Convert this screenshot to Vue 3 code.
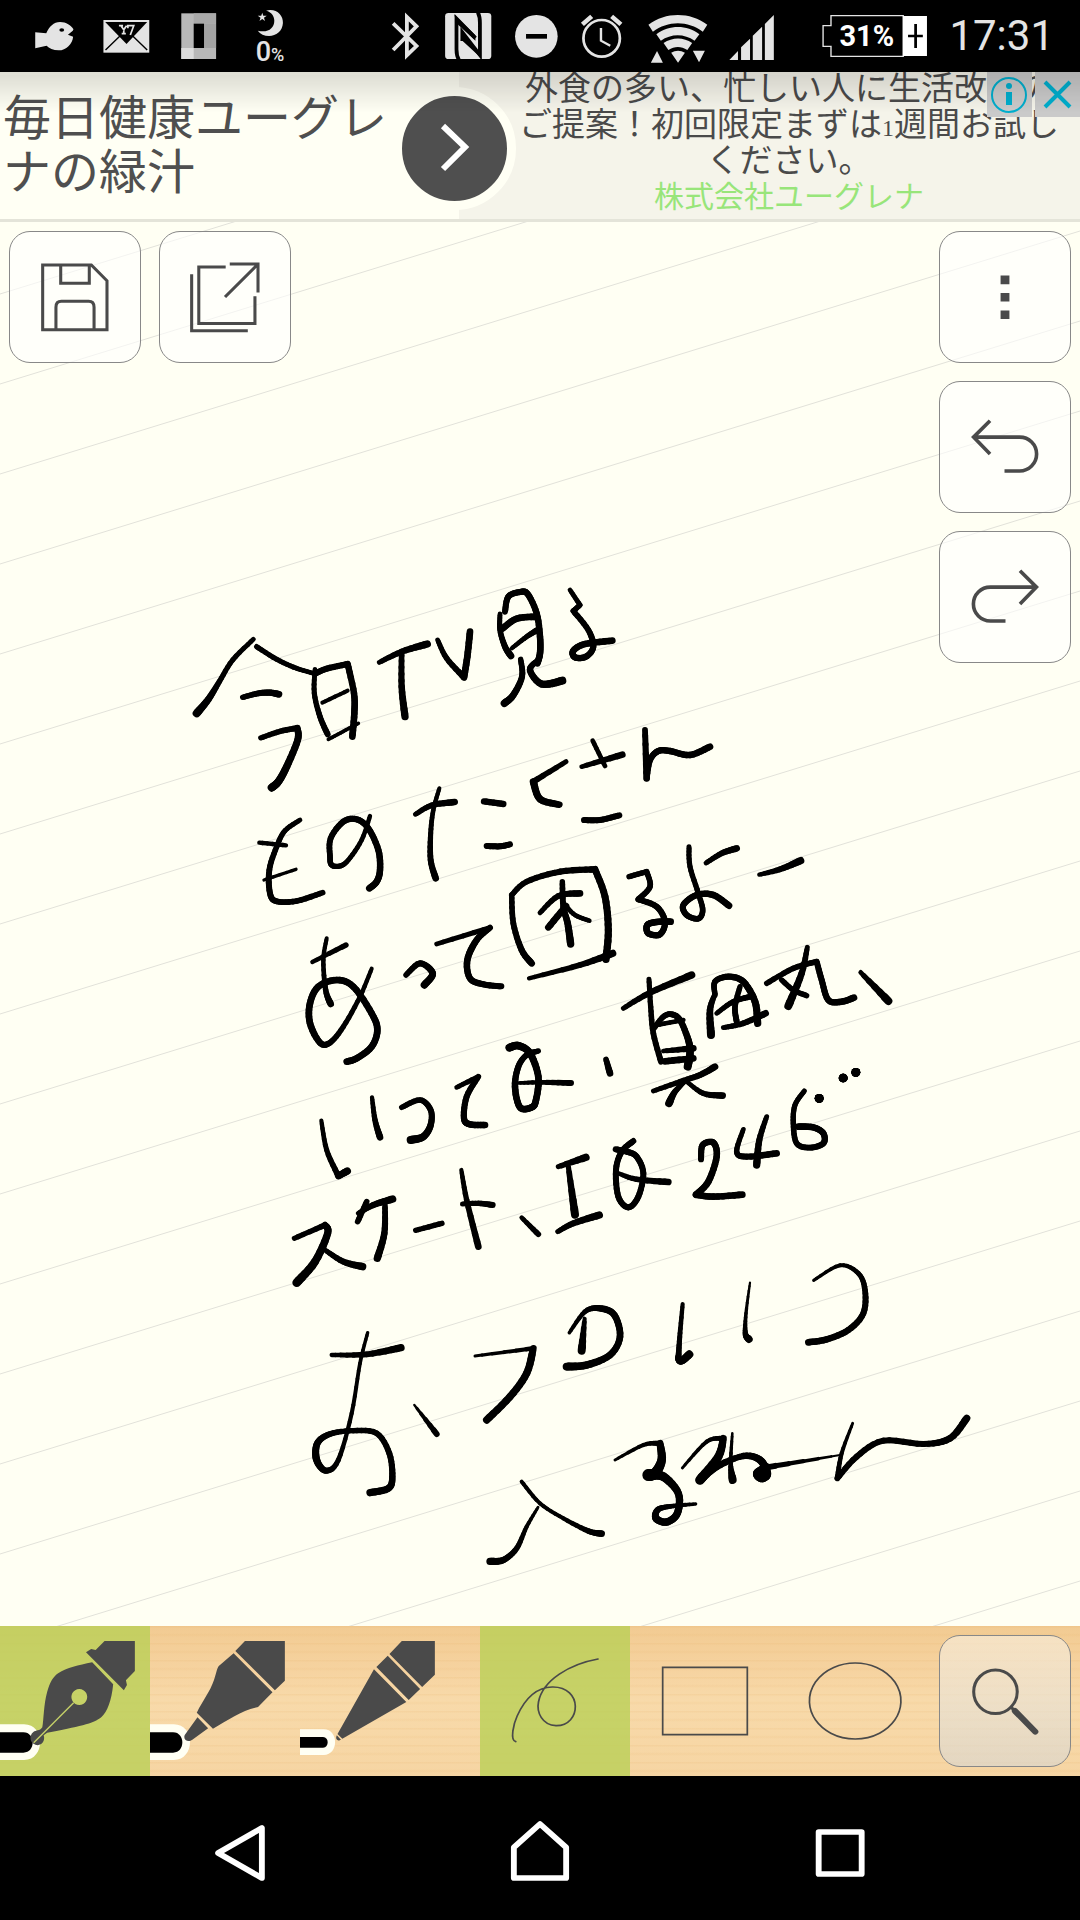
<template>
  <div class="screen">
    <header class="status-bar">
      <div class="status-group">
        <svg class="w72" viewBox="52 0 209 216" preserveAspectRatio="none">
          <path fill="#e4e4e4" d="M102 97l32 3c8-20 22-34 40-34 18 0 32 10 39 22l-2 4-14 12 15 6c-2 22-20 41-42 41-16 0-28-6-35-14l-33 8z" />
          <ellipse cx="179" cy="90" rx="7" ry="5" fill="#000" />
        </svg>
        <svg class="w72" viewBox="261 0 209 216" preserveAspectRatio="none">
          <rect x="300" y="60" width="133" height="98" fill="#e4e4e4" />
          <path fill="#000" d="M305 66h122l-60 66z" />
          <path fill="none" stroke="#000" stroke-width="4" d="M306 150l42-42M427 150l-42-42" />
          <path fill="none" stroke="#e4e4e4" stroke-width="5" d="M345 77h12M351 77l8 12 8-12M359 89v12M353 101h12M368 77h20l-10 28M371 77v8" />
        </svg>
        <svg class="w72" viewBox="470 0 209 216" preserveAspectRatio="none">
          <rect x="526" y="40" width="101" height="137" fill="#b8b8b8" />
          <rect x="592" y="71" width="35" height="73" fill="#a3a3a3" />
          <rect x="562" y="40" width="65" height="31" fill="#a9a9a9" />
          <rect x="526" y="144" width="36" height="33" fill="#dcdcdc" />
          <rect x="562" y="71" width="30" height="73" fill="#000" />
        </svg>
        <div class="sleep">
          <svg class="moon" viewBox="679 27 209 90" preserveAspectRatio="none">
            <path fill="#e4e4e4" d="M772 35c30-8 50 14 49 37-1 24-20 39-40 39-14 0-26-6-33-16 30 8 48-8 48-30 0-14-8-26-24-30z" />
            <path fill="#e4e4e4" d="M761 41l3 9 10 0-8 6 3 10-8-6-8 6 3-10-8-6 10 0z" />
          </svg>
          <span class="sleep-text">0<small>%</small></span>
        </div>
      </div>
      <div class="status-group">
        <svg class="w52" viewBox="1103 0 151 216" preserveAspectRatio="none">
          <path fill="none" stroke="#e4e4e4" stroke-width="11" d="M1144 70l68 68-28 28V51l28 28-68 71" />
        </svg>
        <svg class="w72" viewBox="1254 0 209 216" preserveAspectRatio="none">
          <rect x="1295" y="39" width="134" height="138" rx="10" fill="#e4e4e4" />
          <path fill="none" stroke="#000" stroke-width="11" d="M1335 180q-7-12-7-32V56l55 58M1390 37q6 12 6 32v96l-51-68v26" />
          <path fill="#000" d="M1322 44l61 62v16l-55-52zM1402 176l-57-76v22z" />
        </svg>
        <svg class="w66" viewBox="1463 0 192 216" preserveAspectRatio="none">
          <ellipse cx="1560" cy="109" rx="62" ry="64" fill="#e4e4e4" />
          <rect x="1530" y="102" width="61" height="14" fill="#000" />
        </svg>
        <svg class="w66" viewBox="87 0 192 216" preserveAspectRatio="none">
          <ellipse cx="182" cy="115" rx="53" ry="55" fill="none" stroke="#e4e4e4" stroke-width="8" />
          <path fill="none" stroke="#e4e4e4" stroke-width="7" d="M180 84v38l27 15" />
          <path fill="none" stroke="#e4e4e4" stroke-width="13" d="M126 73l27-24M211 49l27 24" />
        </svg>
        <svg class="w84" viewBox="279 0 244 216" preserveAspectRatio="none">
          <g fill="#e4e4e4">
            <path d="M318 74c50-39 121-39 171 0l-13 21c-43-34-102-34-145 0z" />
            <path d="M341 103c38-29 88-29 125 0l-14 19c-30-22-68-22-98 0z" />
            <path d="M362 129c26-18 58-18 83 0l-14 21c-18-12-37-12-55 0z" />
            <path d="M384 158c13-8 27-8 40 0l-20 30zM325 188l18-35 17 35zM447 152h35l-17 35z" />
          </g>
        </svg>
        <svg class="w80" viewBox="523 0 232 216" preserveAspectRatio="none">
          <path fill="#e4e4e4" d="M553 180l25-27v27zM587 180v-38l26-26v64zM621 180v-73l27-27v100zM656 180V72l26-27v135z" />
        </svg>
        <div class="battery">
          <svg class="w140" viewBox="755 0 407 216" preserveAspectRatio="none">
            <path fill="none" stroke="#e4e4e4" stroke-width="4" d="M1060 47H848v30h-23v62h23v30h212" />
            <rect x="1056" y="48" width="71" height="120" fill="#fff" />
            <path stroke="#000" stroke-width="8" d="M1072 108h43M1094 72v72" />
          </svg>
          <span class="battery-text">31%</span>
        </div>
        <time class="clock">17:31</time>
      </div>
    </header>

    <section class="ad">
      <a class="ad-title" href="#">毎日健康ユーグレナの緑汁</a>
      <button class="ad-go" aria-label="開く">
        <svg viewBox="0 0 105 105"><path d="M41 30l22 21-22 22" fill="none" stroke="#fff" stroke-width="6" /></svg>
      </button>
      <div class="ad-body">
        <p>外食の多い、忙しい人に生活改善の</p>
        <p>ご提案！初回限定まずは<span class="one">1</span>週間お試し</p>
        <p>ください。</p>
        <a class="ad-company" href="#">株式会社ユーグレナ</a>
      </div>
      <div class="ad-choices">
        <button aria-label="広告情報">
          <svg viewBox="0 0 45 45">
            <circle cx="22" cy="23" r="17" fill="none" stroke="#00aecd" stroke-width="2" />
            <circle cx="22" cy="14" r="3" fill="#00aecd" />
            <rect x="19" y="20" width="6" height="13" fill="#00aecd" />
          </svg>
        </button>
        <button aria-label="閉じる">
          <svg viewBox="0 0 45 45"><path d="M10 10l25 25M35 10L10 35" stroke="#00aecd" stroke-width="4" /></svg>
        </button>
      </div>
    </section>

    <main class="paper">
      <svg class="ink" viewBox="0 222 1080 1404" preserveAspectRatio="xMidYMin slice">
        <path class="rule" :d="ruledLines" />
        <g v-for="(block, b) in ink" :key="b" :transform="block.place">
          <line
            v-for="(s, i) in block.segments"
            :key="i"
            :x1="s.x1"
            :y1="s.y1"
            :x2="s.x2"
            :y2="s.y2"
            :stroke-width="s.w"
          />
        </g>
      </svg>
      <div class="actions">
        <button class="tile" aria-label="保存">
          <svg viewBox="27 693 382 394" preserveAspectRatio="none">
            <path d="M123 793h143l46 48v148H123zM176 793v55h84v-55M162 989v-68q0-18 16-18h80q16 0 16 18v68" />
          </svg>
        </button>
        <button class="tile" aria-label="共有">
          <svg viewBox="463 693 382 394" preserveAspectRatio="none">
            <path d="M656 799h-79v171h165v-82M556 821v171h165M668 790h83v86M751 790L654 890" />
          </svg>
        </button>
      </div>
      <div class="actions side">
        <button class="tile" aria-label="メニュー">
          <svg viewBox="1160 693 382 394" preserveAspectRatio="none">
            <path class="solid" d="M1338 825h26v26h-26zM1338 878h26v26h-26zM1338 931h26v26h-26z" />
          </svg>
        </button>
        <button class="tile" aria-label="元に戻す">
          <svg viewBox="118 64 395 394">
            <path class="bold" d="M314 334h46a51 51 0 0 0 0-103H220M270 181l-50 50 50 51" />
          </svg>
        </button>
        <button class="tile" aria-label="やり直す">
          <svg viewBox="118 514 395 394">
            <path class="bold" d="M317 784h-46a51 51 0 0 1 0-103h140M361 631l50 50-50 51" />
          </svg>
        </button>
      </div>
    </main>

    <div class="tools">
      <button
        v-for="t in pens"
        :key="t.id"
        class="tool"
        :class="{ active: pen === t.id }"
        :aria-label="t.label"
        :aria-pressed="pen === t.id"
        @click="pen = t.id"
      >
        <svg :viewBox="t.box" preserveAspectRatio="none">
          <path class="sample-edge" :d="t.edge" />
          <path class="sample" :d="t.sample" />
          <path class="nib" fill-rule="evenodd" :d="t.nib" />
          <path v-if="t.slit" class="slit" :d="t.slit" />
        </svg>
      </button>
      <button
        v-for="t in shapes"
        :key="t.id"
        class="tool shape"
        :class="{ active: shape === t.id }"
        :aria-label="t.label"
        :aria-pressed="shape === t.id"
        @click="shape = t.id"
      >
        <svg :viewBox="t.box" preserveAspectRatio="none"><path class="outline" :d="t.d" /></svg>
      </button>
      <button class="tile zoom" aria-label="拡大">
        <svg viewBox="1160 106 382 394" preserveAspectRatio="none">
          <ellipse cx="1323" cy="275" rx="64" ry="66" />
          <path d="M1366 319l14 14" />
          <path class="handle" d="M1380 333l60 63" />
        </svg>
      </button>
    </div>

    <nav class="nav">
      <button aria-label="戻る">
        <svg viewBox="261 528 871 432" preserveAspectRatio="none"><path d="M760 684v150L633 759z" /></svg>
      </button>
      <button aria-label="ホーム">
        <svg viewBox="1132 528 872 432" preserveAspectRatio="none"><path d="M1492 834V742l76-70 76 70v92z" /></svg>
      </button>
      <button aria-label="履歴">
        <svg viewBox="436 528 872 432" preserveAspectRatio="none"><path d="M810 696h125v126H810z" /></svg>
      </button>
    </nav>
  </div>
</template>

<script setup>
import { ref } from "vue";

const pen = ref("fountain");
const shape = ref("free");

const pens = [
  {
    id: "fountain",
    label: "万年筆",
    box: "0 78 436 450",
    edge: "M0 373H70C132 373 132 480 70 480H0z",
    sample: "M0 397H68C104 397 104 458 68 458H0z",
    nib: "M304 123h88v90l-26 28 3 14-9 16-110-114 15-10 13 3zM268 187l61 66c-5 50-17 82-34 98-22 20-70 30-158 47l-10 8c6 20-10 34-24 28-16-5-20-26-6-38 8-6 18-2 26-14 4-22 4-70 14-106 8-30 18-46 32-56 26-18 58-24 99-33zM230 267a23 24 0 1 0 1 0z",
    slit: "M98 428L214 308"
  },
  {
    id: "marker",
    label: "マーカー",
    box: "436 78 436 450",
    edge: "M436 373H505C568 373 568 480 505 480H436z",
    sample: "M436 397H503C539 397 539 458 503 458H436z",
    nib: "M712 123h116v119l-29 29-115-118zM679 160l113 117-42 44c-46 9-86 38-131 65l-47-48c18-38 38-62 50-98 8-24 8-34 14-42zM574 352l31 33-46 34c-12 10-28 0-22-14z"
  },
  {
    id: "pencil",
    label: "鉛筆",
    box: "871 78 436 450",
    edge: "M871 388H940C984 388 984 465 940 465H871z",
    sample: "M871 411H938C956 411 956 443 938 443H871z",
    nib: "M1167 123h96v101l-37 37-95-99zM1126 167l94 100-33 33-94-99zM1086 208l94 98-186 110-14-14zM978 406l12 13c-8 6-18 0-12-13z"
  }
];

const shapes = [
  { id: "free", label: "自由線", box: "-174 78 436 450", d: "M-70 425C-88 422-76 370-66 348-45 300-14 262 36 261 126 259 121 378 47 377 6 375-10 336-4 306 8 240 88 192 169 177" },
  { id: "rect", label: "四角形", box: "261 78 436 450", d: "M356 202H602V404H356z" },
  { id: "oval", label: "楕円", box: "697 78 436 450", d: "M915 189a133 114 0 1 0 1 0z" }
];

// ruled lines of the tilted page
const ruledLines = Array.from({ length: 22 }, (_, i) => {
  const y = 204 + i * 90;
  return `M0 ${y}L1080 ${y - 333}`;
}).join("");

// each stroke: [pressure list, points]; a repeated point makes a corner
const notes = [
  {
    x: 180, y: 570,
    strokes: [
      [[14, 16, 24], "220,208 158,270 118,335 85,388 50,430"],
      [[16, 14], "230,230 290,268 350,295 405,311"],
      [[16, 20], "188,382 235,370 270,368 297,373"],
      [[15, 20, 24], "242,504 300,484 352,474 352,474 353,510 320,590 295,635 275,653"],
      [[14, 18], "405,298 403,370 420,440 443,493"],
      [[18, 20], "405,311 440,296 503,282 503,282 522,370 523,430 517,500"],
      [[12], "427,398 503,362"],
      [[11], "445,508 490,484 535,460"],
      [[14, 22], "598,277 665,245 742,222"],
      [[16, 22], "665,245 665,350 675,440"],
      [[14, 20, 20], "773,210 800,265 852,322 852,322 862,260 870,185"],
      [[18, 20], "975,125 985,80 1020,66 1043,72 1070,130 1080,200 1080,250 1072,280"],
      [[14, 20], "960,132 960,180 975,230 993,258"],
      [[20], "966,177 1010,146 1070,140"],
      [[12, 18], "995,235 1040,200 1072,180"],
      [[16, 22], "1022,268 1026,320 1000,375 973,400"],
      [[16, 24], "1072,272 1050,300 1085,342 1147,332"],
      [[14, 18, 20], "1170,60 1200,105 1200,105 1180,123 1180,123 1225,180 1240,230 1218,260 1185,262 1180,242 1215,222 1297,212"],
      [[14, 18, 17], "360,750 315,782 290,830 268,900 270,970 290,994 350,993 428,968"],
      [[13], "238,818 318,826"],
      [[10], "252,930 348,898"],
      [[13, 18, 20], "570,738 545,810 505,870 480,888 455,885 450,860 452,805 490,755 530,748 565,775 595,840 600,900 590,935 568,955"],
      [[12, 15, 20], "778,655 760,720 752,790 752,870 767,925"],
      [[14, 20], "706,733 755,706 824,696"],
      [[19], "912,694 970,702"],
      [[18], "920,828 960,829 990,823"],
      [[14, 22, 20], "1158,575 1060,635 1060,635 1080,687 1138,704"],
      [[14], "1238,512 1275,588"],
      [[13, 20], "1205,590 1327,554"],
      [[18], "1212,750 1260,750 1318,736"]
    ]
  },
  {
    x: 480, y: 570,
    strokes: [
      [[17, 20], "495,480 500,625"],
      [[18, 20], "500,625 510,570 535,543 570,543 630,555 690,530"],
      [[16, 20], "95,975 100,1060 125,1140 155,1180"],
      [[16, 20, 22], "95,975 140,935 240,905 345,898 345,898 375,980 385,1080 378,1168"],
      [[12, 22], "147,1225 300,1185 398,1150"],
      [[16, 22], "247,935 250,1010 263,1060 272,1122"],
      [[14, 20], "180,1028 235,978 300,970"],
      [[20], "205,1072 258,1008"],
      [[14], "255,1005 285,1035 328,1052"],
      [[16, 20], "447,920 500,905 500,905 510,950 475,988 475,988 530,1010 555,1055 540,1093 505,1090 502,1065 530,1056 572,1055"],
      [[15, 20], "627,830 630,890 655,970 668,1020 655,1046 620,1035 610,1005 650,975 700,975 747,1007"],
      [[14, 20], "678,879 725,850 770,835"],
      [[12, 22], "838,914 900,898 962,872"]
    ]
  },
  {
    x: 260, y: 880,
    strokes: [
      [[12, 14, 20], "200,175 190,240 197,330 212,372"],
      [[12, 16], "157,246 258,195"],
      [[12, 20, 20, 20], "335,266 300,350 250,440 210,488 180,488 150,430 150,370 175,320 230,300 280,320 335,400 352,450 335,500 290,535 260,545"],
      [[16, 22], "438,285 480,250 518,280 493,315"],
      [[14, 20, 18], "530,192 690,143 690,143 650,180 622,240 630,295 670,313 724,319"],
      [[12, 18, 22], "184,722 200,810 235,888 235,888 262,873"],
      [[12, 20], "336,652 345,720 360,772"],
      [[16, 18, 24], "425,682 480,660 512,690 512,735 490,770 452,780"],
      [[14, 18, 20], "590,622 655,590 655,590 620,650 612,715 630,733 675,735"],
      [[24, 20, 20, 16], "748,503 775,497 810,520 835,590 828,660 815,682 780,682 765,620 775,560 800,525 835,513"],
      [[10, 18], "775,609 845,607 933,609"],
      [[16, 20], "1038,538 1050,580"],
      [[15, 20, 26], "103,1075 195,1035 195,1035 203,1060 165,1145 110,1208"],
      [[14, 22], "195,1110 250,1145 308,1160"],
      [[17], "320,965 293,1025"],
      [[14, 22], "295,1000 340,975 398,957"],
      [[16, 22], "375,975 373,1060 352,1135"],
      [[16], "467,1051 546,1030"],
      [[12, 20], "604,870 620,960 655,1100"],
      [[14, 18], "607,972 655,970 698,975"],
      [[13, 17], "785,1013 835,1063"],
      [[14, 22], "895,860 978,832"],
      [[14, 24], "925,860 945,1004"],
      [[14, 22], "893,1055 940,1030 1018,1005"],
      [[18], "1120,783 1085,815 1068,870 1075,950 1105,982 1135,950 1150,880 1130,830 1100,815 1067,808"],
      [[12, 20], "1075,880 1130,898 1225,906"]
    ]
  },
  {
    x: 580, y: 920,
    strokes: [
      [[14, 22], "130,265 210,218 335,165"],
      [[15, 18], "207,178 212,260 220,340 243,425"],
      [[16, 18, 24], "222,325 250,290 275,283 300,300 325,360 330,400 323,440"],
      [[14], "230,315 310,300"],
      [[13, 20], "250,393 340,385"],
      [[20], "255,424 340,415"],
      [[14, 20], "220,513 300,485 360,465 405,440"],
      [[24, 12], "267,550 285,515 320,480"],
      [[12, 20], "320,485 370,520 428,527"],
      [[14, 24], "405,222 390,270 393,345"],
      [[16, 22], "405,225 405,185 445,170 490,185 525,245 533,310"],
      [[14, 18], "410,280 460,245 520,228"],
      [[16, 18], "480,200 465,260 470,305"],
      [[14, 20], "430,323 490,310 557,280"],
      [[14, 24], "682,82 665,160 625,258"],
      [[16, 20], "560,190 640,145 710,125 710,125 725,180 745,240 785,245 822,233"],
      [[16], "605,180 640,210 680,227"],
      [[12, 24], "842,157 925,243"],
      [[18, 20, 20], "363,718 368,675 400,668 410,710 385,785 348,824 348,824 400,830 487,824"],
      [[14, 20], "490,628 470,695 500,710 590,700"],
      [[14, 22], "560,590 538,660 530,735"],
      [[15, 20], "673,513 645,555 640,610 650,670 690,683 730,670 730,640 700,622 655,620"],
      [[26], "717,535 718,535"],
      [[26], "789,474 790,474"],
      [[26], "827,457 828,457"]
    ]
  },
  {
    x: 280, y: 1230,
    strokes: [
      [[10, 13, 22, 16, 18, 22], "263,308 240,400 215,550 175,690 138,722 110,690 112,640 150,612 220,602 290,610 328,670 337,740 325,775 270,788"],
      [[12, 22], "155,375 260,373 363,353"],
      [[5, 18], "403,525 470,612"],
      [[8, 22, 22], "585,378 760,355 760,355 740,430 690,500 620,570"],
      [[10, 20, 20, 24], "868,308 915,245 960,235 1003,255 1020,320 990,375 920,405 860,410"],
      [[10, 24], "914,266 905,362"],
      [[8, 16, 22], "774,832 740,890 710,955 670,990 630,994"],
      [[12, 12, 20], "725,755 780,820 850,865 925,903 965,911"]
    ]
  },
  {
    x: 600, y: 1230,
    strokes: [
      [[12, 18, 24], "248,222 240,310 236,370 236,388 246,392 268,373"],
      [[6, 12, 22], "450,158 438,250 436,310 447,328"],
      [[9, 18, 20], "641,151 720,106 775,130 795,180 790,250 745,300 680,328 625,337"],
      [[8, 20, 36, 22, 22, 10], "45,690 130,645 180,640 180,640 185,690 165,730 145,735 145,735 190,740 235,790 232,850 200,876 168,865 175,838 220,828 287,822"],
      [[8, 18, 30, 18, 26, 26], "247,714 320,635 370,625 370,625 355,680 300,750 300,750 350,710 430,678 480,690 501,730 485,744 472,730 500,712"],
      [[7, 12, 24], "397,610 392,700 398,750"],
      [[20, 6], "500,712 720,675"],
      [[8, 16, 18, 18, 22], "758,580 725,670 712,745 712,745 770,680 850,632 970,642 1050,625 1100,565"]
    ]
  }
];

function lerpList(list, t) {
  if (list.length === 1) return list[0];
  const pos = t * (list.length - 1);
  const i = Math.min(Math.floor(pos), list.length - 2);
  return list[i] + (list[i + 1] - list[i]) * (pos - i);
}

function spline(a, b, c, d, t) {
  return 0.5 * (2 * b + (c - a) * t + (2 * a - 5 * b + 4 * c - d) * t * t + (3 * b - a - 3 * c + d) * t * t * t);
}

function toSegments([pressure, text]) {
  const pts = text.split(" ").map(p => p.split(",").map(Number));
  const steps = 6;
  const out = [];
  let prev = pts[0];
  for (let i = 0; i < pts.length - 1; i++) {
    const p0 = pts[Math.max(i - 1, 0)];
    const p1 = pts[i];
    const p2 = pts[i + 1];
    const p3 = pts[Math.min(i + 2, pts.length - 1)];
    if (p1[0] === p2[0] && p1[1] === p2[1]) continue;
    for (let k = 1; k <= steps; k++) {
      const t = k / steps;
      const next = [0, 1].map(n => Math.round(spline(p0[n], p1[n], p2[n], p3[n], t) * 10) / 10);
      out.push({
        x1: prev[0],
        y1: prev[1],
        x2: next[0],
        y2: next[1],
        w: Math.round(lerpList(pressure, (i + t) / (pts.length - 1)) * 10) / 10
      });
      prev = next;
    }
  }
  return out;
}

const ink = notes.map(n => ({
  place: `translate(${n.x} ${n.y}) scale(${1 / 3})`,
  segments: n.strokes.flatMap(toSegments)
}));
</script>

<style>
body {
  background: #000;
}
</style>

<style scoped>
.screen {
  display: flex;
  flex-direction: column;
  min-height: 100vh;
  font-family: "Noto Sans CJK JP", sans-serif;
  color: #4a4a4a;
}

button {
  margin: 0;
  padding: 0;
  border: 0;
  background: none;
  cursor: pointer;
}

svg {
  display: block;
}

.status-bar {
  display: flex;
  justify-content: space-between;
  height: 72px;
  padding: 0 26px 0 18px;
  background: #000;
  color: #e4e4e4;
  font-family: Roboto, sans-serif;
}

.status-group {
  display: flex;
  align-items: center;
}

.status-group svg {
  height: 72px;
}

.w52 { width: 52px; }
.w66 { width: 66px; }
.w72 { width: 72px; }
.w80 { width: 80px; }
.w84 { width: 84px; }
.w140 { width: 140px; }

.sleep {
  width: 72px;
  height: 56px;
  text-align: center;
}

.sleep .moon {
  width: 72px;
  height: 30px;
}

.sleep-text {
  display: block;
  font-size: 27px;
  font-weight: 500;
  line-height: 28px;
}

.sleep-text small {
  font-size: 18px;
}

.battery {
  position: relative;
}

.battery-text {
  position: absolute;
  top: 0;
  left: 40px;
  color: #fff;
  font-size: 29px;
  font-weight: 700;
  line-height: 72px;
}

.clock {
  padding-left: 10px;
  font-size: 42px;
  line-height: 72px;
}

.ad {
  position: relative;
  display: flex;
  align-items: flex-start;
  height: 147px;
  overflow: hidden;
  border-bottom: 3px solid #e4e4d9;
  background: linear-gradient(90deg, #fffff4 459px, #f5f4ea 459px);
}

.ad::after {
  content: "";
  position: absolute;
  inset: 0 0 auto;
  height: 38px;
  border-top: 3px solid rgba(0, 0, 0, 0.12);
  background: linear-gradient(rgba(0, 0, 0, 0.13), rgba(0, 0, 0, 0));
  pointer-events: none;
}

.ad-title {
  width: 390px;
  padding: 15px 0 0 3px;
  color: #4f4f4f;
  font-size: 48px;
  line-height: 54px;
  text-decoration: none;
}

.ad-go {
  flex: none;
  width: 123px;
  height: 123px;
  margin-top: 15px;
  border: 9px solid #fffff4;
  border-radius: 50%;
  background: #4f4f4f;
}

.ad-body {
  flex: 1;
  margin-top: -4px;
  padding: 0 18px 0 0;
  color: #4a4a4a;
  font-size: 33px;
  line-height: 36px;
  text-align: center;
  white-space: nowrap;
}

.ad-body p {
  height: 36px;
  margin: 0;
}

.one {
  font-family: "Liberation Serif", serif;
  font-size: 24px;
  line-height: 24px;
}

.ad-company {
  display: block;
  color: #98e57a;
  font-size: 30px;
  text-decoration: none;
}

.ad-choices {
  position: absolute;
  top: 0;
  right: 0;
  display: flex;
  gap: 3px;
}

.ad-choices button {
  width: 45px;
  height: 45px;
  background: #cacaca;
}

.paper {
  position: relative;
  display: flex;
  flex: 1;
  align-items: flex-start;
  justify-content: space-between;
  padding: 9px;
  overflow: hidden;
  background: #fffff3;
}

.ink {
  position: absolute;
  inset: 0;
  width: 100%;
  height: 100%;
}

.ink line {
  stroke: #000;
  stroke-linecap: round;
}

.rule {
  stroke: #e2e2da;
  stroke-width: 1;
}

.actions {
  position: relative;
  display: flex;
  gap: 18px;
}

.side {
  flex-direction: column;
}

.tile {
  width: 132px;
  height: 132px;
  border: 1px solid #888;
  border-radius: 21px;
  background: rgba(255, 255, 255, 0.6);
}

.tile svg {
  width: 130px;
  height: 130px;
  fill: none;
  stroke: #4a4a4a;
  stroke-width: 9;
}

.tile .bold {
  stroke-width: 11;
}

.tile .solid {
  fill: #4a4a4a;
  stroke: none;
}

.tools {
  display: flex;
  align-items: center;
  height: 150px;
  background:
    repeating-linear-gradient(rgba(226, 168, 92, 0.12) 0 1px, transparent 2px 7px, rgba(226, 168, 92, 0.1) 9px, transparent 11px 17px),
    linear-gradient(#f2cb92, #f6d3a0 30%, #f8daaa 50%, #f6d5a3);
}

.tool {
  width: 150px;
  height: 150px;
}

.tool svg {
  width: 150px;
  height: 150px;
}

.tool.active {
  background: rgba(184, 208, 84, 0.78);
}

.tool:not(.shape) + .shape {
  margin-left: 30px;
}

.sample-edge {
  fill: #fffff3;
}

.sample {
  fill: #000;
}

.nib {
  fill: #4a4a4a;
}

.slit {
  stroke: #c5d068;
  stroke-width: 4;
}

.outline {
  fill: none;
  stroke: #4a4a4a;
  stroke-width: 5;
  stroke-linecap: round;
}

.zoom {
  margin: 0 9px 0 auto;
  background: linear-gradient(rgba(248, 240, 225, 0.6), rgba(215, 215, 212, 0.6));
}

.zoom .handle {
  stroke-width: 18;
  stroke-linecap: round;
}

.nav {
  display: flex;
  justify-content: center;
  height: 144px;
  background: #000;
}

.nav button {
  width: 300px;
}

.nav svg {
  width: 300px;
  height: 144px;
  fill: none;
  stroke: #fff;
  stroke-width: 17;
  stroke-linejoin: round;
}
</style>
